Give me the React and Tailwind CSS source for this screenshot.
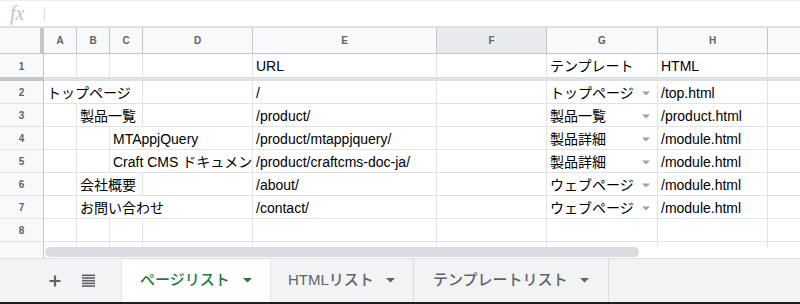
import React from "react";

const Arrow = () => (
  <svg width="8" height="5" viewBox="0 0 8 5" className="shrink-0">
    <path d="M0 0.5 L8 0.5 L4 4.5 Z" fill="#a0a0a0" />
  </svg>
);

const Caret = ({ color }) => (
  <svg width="9" height="5" viewBox="0 0 9 5" className="shrink-0">
    <path d="M0 0 L9 0 L4.5 4.5 Z" fill={color} />
  </svg>
);

function Cell({ w, children, noBorder }) {
  return (
    <div
      className={`${w} h-full shrink-0 flex items-center pl-[3px] pt-[2px] overflow-hidden whitespace-nowrap ${
        noBorder ? "" : "border-r border-[#e2e3e3]"
      }`}
    >
      {children}
    </div>
  );
}

function DropCell({ text }) {
  return (
    <div className="w-[111px] h-full shrink-0 flex items-center justify-between pl-[3px] pr-[7px] pt-[2px] border-r border-[#e2e3e3] whitespace-nowrap overflow-hidden">
      <span>{text}</span>
      <Arrow />
    </div>
  );
}

function RowHead({ n }) {
  return (
    <div className="w-[44px] h-full shrink-0 bg-[#f8f9fa] border-r border-[#c4c7c5] flex items-center justify-center text-[10px] font-bold text-[#5f6368] pt-[1px]">
      {n}
    </div>
  );
}

function Row({ n, children }) {
  return (
    <div className="flex h-[23px] border-b border-[#e2e3e3] text-[14px] text-black">
      <RowHead n={n} />
      {children}
      <div className="flex-1 h-full" />
    </div>
  );
}

function Tail({ e, g, h, drop = true }) {
  return (
    <>
      <Cell w="w-[184px]">{e}</Cell>
      <Cell w="w-[110px]" />
      {drop ? <DropCell text={g} /> : <Cell w="w-[111px]">{g}</Cell>}
      <Cell w="w-[110px]">{h}</Cell>
    </>
  );
}

const cols = [
  ["A", "w-[33px]"],
  ["B", "w-[33px]"],
  ["C", "w-[33px]"],
  ["D", "w-[110px]"],
  ["E", "w-[184px]"],
  ["F", "w-[110px]"],
  ["G", "w-[111px]"],
  ["H", "w-[110px]"],
];

export default function App() {
  return (
    <div className="w-[800px] h-[304px] bg-white overflow-hidden flex flex-col font-['Liberation_Sans','Noto_Sans_CJK_JP',sans-serif]">
      {/* formula bar */}
      <div className="h-[28px] shrink-0 flex items-center border-t border-[#eeeeee] border-b-2 border-b-[#e0e0e0]">
        <div className="w-[44px] flex items-center pl-[10px] pb-[2px]">
          <span className="font-['Liberation_Serif',serif] italic text-[20px] text-[#c4c4c4] leading-none">
            fx
          </span>
        </div>
        <div className="w-px h-[13px] bg-[#dadce0]" />
      </div>

      {/* column headers */}
      <div className="h-[26px] shrink-0 flex border-b border-[#c4c7c5] text-[10px] font-bold text-[#5f6368]">
        <div className="w-[44px] h-full shrink-0 bg-[#f8f9fa] border-r-4 border-[#c4c7c5]" />
        {cols.map(([c, w]) => (
          <div
            key={c}
            className={`${w} h-full shrink-0 flex items-center justify-center border-r border-[#c4c7c5] ${
              c === "F" ? "bg-[#e8eaed]" : "bg-[#f8f9fa]"
            }`}
          >
            {c}
          </div>
        ))}
        <div className="flex-1 h-full bg-[#f8f9fa]" />
      </div>

      {/* row 1 */}
      <div className="flex h-[24px] text-[14px] text-black">
        <RowHead n="1" />
        <Cell w="w-[33px]" />
        <Cell w="w-[33px]" />
        <Cell w="w-[33px]" />
        <Cell w="w-[110px]" />
        <Tail e="URL" g="テンプレート" h="HTML" drop={false} />
        <Cell w="w-[32px]" noBorder />
      </div>
      {/* frozen bar */}
      <div className="h-[4px] shrink-0 flex">
        <div className="w-[44px] bg-[#c4c7c5]" />
        <div className="flex-1 bg-[#dde1e7]" />
      </div>

      <Row n="2">
        <Cell w="w-[99px]">トップページ</Cell>
        <Cell w="w-[110px]" />
        <Tail e="/" g="トップページ" h="/top.html" />
      </Row>
      <Row n="3">
        <Cell w="w-[33px]" />
        <Cell w="w-[66px]">製品一覧</Cell>
        <Cell w="w-[110px]" />
        <Tail e="/product/" g="製品一覧" h="/product.html" />
      </Row>
      <Row n="4">
        <Cell w="w-[33px]" />
        <Cell w="w-[33px]" />
        <Cell w="w-[143px]">MTAppjQuery</Cell>
        <Tail e="/product/mtappjquery/" g="製品詳細" h="/module.html" />
      </Row>
      <Row n="5">
        <Cell w="w-[33px]" />
        <Cell w="w-[33px]" />
        <Cell w="w-[143px]">Craft CMS ドキュメント</Cell>
        <Tail e="/product/craftcms-doc-ja/" g="製品詳細" h="/module.html" />
      </Row>
      <Row n="6">
        <Cell w="w-[33px]" />
        <Cell w="w-[66px]">会社概要</Cell>
        <Cell w="w-[110px]" />
        <Tail e="/about/" g="ウェブページ" h="/module.html" />
      </Row>
      <Row n="7">
        <Cell w="w-[33px]" />
        <Cell w="w-[176px]">お問い合わせ</Cell>
        <Tail e="/contact/" g="ウェブページ" h="/module.html" />
      </Row>
      <Row n="8">
        <Cell w="w-[33px]" />
        <Cell w="w-[33px]" />
        <Cell w="w-[33px]" />
        <Cell w="w-[110px]" />
        <Tail e="" g="" h="" drop={false} />
      </Row>

      {/* partial row + scrollbar */}
      <div className="h-[16px] shrink-0 flex">
        <div className="w-[44px] shrink-0 bg-[#f8f9fa] border-r border-[#c4c7c5]" />
        <div className="flex-1 flex flex-col">
          <div className="h-[5px] flex">
            {["w-[33px]", "w-[33px]", "w-[33px]", "w-[110px]", "w-[184px]", "w-[110px]", "w-[111px]", "w-[110px]"].map(
              (w, i) => (
                <div key={i} className={`${w} h-full shrink-0 border-r border-[#e2e3e3]`} />
              )
            )}
          </div>
          <div className="flex-1 flex items-start">
            <div className="ml-[1px] w-[594px] h-[10px] rounded-full bg-[#dadce0]" />
          </div>
        </div>
      </div>

      {/* sheet tabs */}
      <div className="h-[44px] shrink-0 flex bg-[#f1f3f4] border-t border-[#e0e0e0]">
        <div className="w-[122px] shrink-0 flex items-center">
          <svg width="14" height="14" viewBox="0 0 14 14" className="ml-[48px]">
            <path d="M7 1.5 V12.5 M1.5 7 H12.5" stroke="#5f6368" strokeWidth="2.2" />
          </svg>
          <svg width="13" height="13" viewBox="0 0 13 13" className="ml-[20px]">
            <g fill="#5f6368">
              <rect x="0" y="0.5" width="13" height="1.6" />
              <rect x="0" y="3.2" width="13" height="1.6" />
              <rect x="0" y="5.9" width="13" height="1.6" />
              <rect x="0" y="8.6" width="13" height="1.6" />
              <rect x="0" y="11.3" width="13" height="1.6" />
            </g>
          </svg>
        </div>
        <div className="w-[148px] shrink-0 bg-white flex items-center pl-[18px] gap-[13px] shadow-[0_0_2px_rgba(0,0,0,0.15)] text-[15px] font-medium text-[#188038]">
          <span>ページリスト</span>
          <Caret color="#188038" />
        </div>
        <div className="w-[144px] shrink-0 flex items-center pl-[18px] gap-[12px] border-r border-[#dadce0] text-[15px] font-medium text-[#5f6368]">
          <span>HTMLリスト</span>
          <Caret color="#5f6368" />
        </div>
        <div className="w-[195px] shrink-0 flex items-center pl-[19px] gap-[12px] border-r border-[#dadce0] text-[15px] font-medium text-[#5f6368]">
          <span>テンプレートリスト</span>
          <Caret color="#5f6368" />
        </div>
        <div className="flex-1" />
      </div>
      <div className="h-[2px] shrink-0 bg-[#1f1f1f]" />
    </div>
  );
}
